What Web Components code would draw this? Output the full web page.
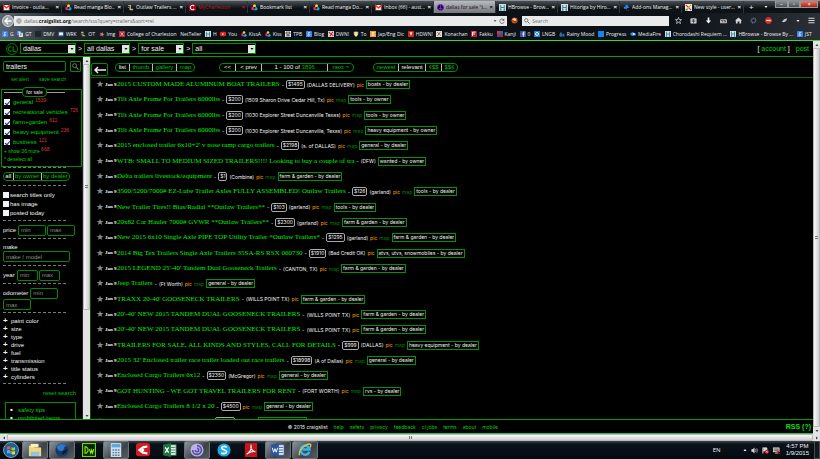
<!DOCTYPE html>
<html lang="en">
<head>
<meta charset="utf-8">
<title>dallas for sale "trailers" - craigslist</title>
<style>
html,body{margin:0;height:100%;background:#000}
body{font:6px/8px "Liberation Sans",Arial,sans-serif;color:#f2f2f2;--edge:#008c00;--link:#00d400;overflow:hidden}
</style>
</head>
<body>
<desktop-screen></desktop-screen>
<script>
const define = (name, render) => customElements.define(name, class extends HTMLElement {
  connectedCallback() {
    if (this.shadowRoot) return;
    const t = document.createElement('template');
    t.innerHTML = '<style>*{box-sizing:border-box}a{color:inherit;text-decoration:none}button{font:inherit;color:inherit;background:none;border:0;padding:0;margin:0}</style>' + render(this);
    this.attachShadow({mode: 'open'}).append(t.content.cloneNode(true));
  }
});
const attr = (el, n, d = '') => el.getAttribute(n) ?? d;

const ICONS = {
  gmail: '<rect y="2" width="16" height="12" rx="1" fill="#eee"/><path d="M1 14V3l7 6 7-6v11" fill="none" stroke="#d93025" stroke-width="3"/>',
  manga: '<circle cx="5" cy="10" r="4.5" fill="#e91e8c"/><circle cx="11" cy="11" r="4" fill="#00b5e2"/><circle cx="8" cy="4" r="3.5" fill="#ffd400"/><circle cx="8" cy="9" r="2" fill="#111"/>',
  outlaw: '<path d="M3 2h6v9h5v3H7V5H3z" fill="#c9b96a"/><path d="M2 8h4v6" stroke="#eee" fill="none"/>',
  cofc: '<rect width="16" height="16" rx="2" fill="#a80018"/><path d="M12 5a5 5 0 1 0 0 6" stroke="#fff" stroke-width="2.4" fill="none"/>',
  peace: '<circle cx="8" cy="8" r="7" fill="#1a0030" stroke="#7a2bd0" stroke-width="2"/><path d="M8 1v14M8 8l-5 5M8 8l5 5" stroke="#7a2bd0" stroke-width="2"/>',
  hb: '<rect width="16" height="16" fill="#c9e6ee"/><path d="M4 2v12M12 2v12M4 8h8M2 14h4M10 14h4" stroke="#37707f" stroke-width="2"/>',
  puzzle: '<path d="M2 6h4a3 3 0 1 1 5 0h3v4a3 3 0 1 0 0 4H8v-3H2z" fill="#2f7ff0"/>',
  style: '<rect width="16" height="16" fill="#eee"/><path d="M2 2l12 12" stroke="#c33" stroke-width="3"/><path d="M14 2L2 14" stroke="#e5a11a" stroke-width="3"/><path d="M1 12h5v3H1z" fill="#295"/>',
  google: '<rect width="16" height="16" rx="1" fill="#3b82ec"/><path d="M11 4H7a2 2 0 1 0 1 4c3 0 3 5-1 5-4 0-3-4 1-4" stroke="#fff" stroke-width="1.6" fill="none"/>',
  gt: '<rect width="11" height="11" fill="#4a8df0"/><rect x="5" y="5" width="11" height="11" fill="#ddd"/><path d="M3 3h5v4" stroke="#fff" stroke-width="2" fill="none"/><path d="M8 8h5M10 8v5" stroke="#567" stroke-width="1.5"/>',
  dark: '<rect width="16" height="16" fill="#20262b"/>',
  mail: '<rect x="1" y="2" width="14" height="12" fill="#3a78b8"/><rect x="3" y="4" width="10" height="7" fill="#f4f4f4"/>',
  img: '<path d="M2 4l5 2 3-4 1 5 4 2-4 2v4l-4-3-5 1 2-5z" fill="#e8502a"/><rect x="5" y="6" width="5" height="5" fill="#5aa0f0"/>',
  red: '<rect width="16" height="16" fill="#b03038"/><path d="M4 3l8 10M12 3L4 13" stroke="#fbb" stroke-width="2"/>',
  youtube: '<rect y="2" width="16" height="12" rx="3" fill="#e62117"/><path d="M6 5l5 3-5 3z" fill="#fff"/>',
  tpb: '<rect width="16" height="16" fill="#eee"/><path d="M3 3h10v5H3zM8 8v5M2 13h12" stroke="#222" stroke-width="2" fill="none"/>',
  dwn: '<rect width="16" height="16" fill="#d9cfc8"/><path d="M2 3l12 10M5 14l8-12" stroke="#c2273a" stroke-width="3"/>',
  shield: '<path d="M2 2h12v6c0 4-6 7-6 7S2 12 2 8z" fill="#d9c36a"/><path d="M8 2v12" stroke="#fff" stroke-width="3"/>',
  jap: '<rect width="16" height="16" fill="#f49b2e"/><path d="M4 4h8M4 8h8M4 12h8M8 3v10" stroke="#fff" stroke-width="1.5"/>',
  hdw: '<rect width="16" height="16" fill="#d52415"/><path d="M4 3h8L8 13z" fill="#fff3c0"/>',
  kona: '<rect width="16" height="16" fill="#e8ded2"/><path d="M3 3l10 9M4 13l8-11" stroke="#7a4a34" stroke-width="2"/>',
  fakku: '<rect width="16" height="16" fill="#c31d2a"/><path d="M4 13V3h8M4 8h6" stroke="#fff" stroke-width="2.5" fill="none"/>',
  kanji: '<rect width="8" height="8" fill="#d33"/><rect x="8" width="8" height="8" fill="#2a62c9"/><rect y="8" width="8" height="8" fill="#7a2b9e"/><rect x="8" y="8" width="8" height="8" fill="#b2222e"/><path d="M5 5h6v6H5z" fill="#1b7a3a"/>',
  fb: '<rect width="16" height="16" rx="1" fill="#3b5998"/><path d="M12 3H9v12M6 8h6" stroke="#fff" stroke-width="2.4" fill="none"/>',
  ring: '<rect width="16" height="16" fill="#1f7fd0"/><circle cx="8" cy="8" r="4" stroke="#fff" stroke-width="2.4" fill="none"/>',
  rain: '<path d="M5 2s4 6 4 9a4 4 0 0 1-8 0c0-3 4-9 4-9zM12 6s3 4 3 6a3 3 0 0 1-6 0c0-2 3-6 3-6z" fill="#2f6fa6"/>',
  blue: '<rect width="16" height="16" fill="#1583ee"/>',
  fire: '<path d="M0 8c4-6 9-6 12-3 3 0 4 2 4 4s-2 4-5 3C7 15 3 12 0 8z" fill="#2d8ef0"/><circle cx="10" cy="8" r="2.5" fill="#fff"/>',
  duck: '<circle cx="8" cy="8" r="7" fill="#d94a1c"/><path d="M3 5c4-4 9-2 9 2l-5 4z" fill="#ffd9a0"/><path d="M4 8l8 4" stroke="#7a1a05" stroke-width="2"/>',
  globe: '<circle cx="8" cy="8" r="6.5" fill="#c9c9c9" stroke="#999" stroke-width="1.5"/><path d="M2 8h12M8 2c-4 4-4 8 0 12M8 2c4 4 4 8 0 12" stroke="#888" fill="none"/>',
  reload: '<path d="M13 5a6 6 0 1 0 1 5" stroke="#555" stroke-width="2" fill="none"/><path d="M14 1v6H8z" fill="#555"/>',
  mag: '<circle cx="6" cy="6" r="4.5" stroke="currentColor" stroke-width="2" fill="none"/><path d="M10 10l5 5" stroke="currentColor" stroke-width="2.4"/>',
  star: '<path d="M8 1l2 5h5l-4 3.500 1.500 5.500L8 12l-4.500 3L5 9.500 1 6h5z" fill="none" stroke="#e6e6e6" stroke-width="1.600"/>',
  clip: '<rect x="1" y="3" width="14" height="12" rx="2" fill="#d0d0d0"/><path d="M5 3V1h6v2M4 7h8M4 10h8M8 5v9" stroke="#222" stroke-width="1.400" fill="none"/>',
  down: '<path d="M6 1h4v7h4l-6 7-6-7h4z" fill="#f2f2f2"/>',
  label: '<rect x="0" y="5" width="16" height="9" rx="1" fill="#bbb"/><path d="M2 8h4v4M8 8h3v4M13 8v4" stroke="#222" stroke-width="1.400" fill="none"/>',
  home: '<path d="M8 1l8 7h-2v7h-4v-5H6v5H2V8H0z" fill="#d5d5d5"/>',
  gear: '<circle cx="8" cy="8" r="5" fill="none" stroke="#5b6d7b" stroke-width="3.500" stroke-dasharray="3 1"/>',
  abp: '<path d="M5 0h6l5 5v6l-5 5H5l-5-5V5z" fill="#d7261c"/><path d="M3 8h10" stroke="#fff" stroke-width="3"/>',
  flash: '<path d="M2 11l5-6 7-2-2 6-6 3z" fill="#c7c7c7"/>',
  menu: '<path d="M1 3h14M1 8h14M1 13h14" stroke="#dcdcdc" stroke-width="2.400"/>',
  orb: '<circle cx="8" cy="8" r="7.500" fill="#1d5f97" stroke="#8fb8d8" stroke-width=".8"/><path d="M4 5q2-1.500 3.500 0V8Q6 6.500 4 7.500z" fill="#f0562a"/><path d="M8.500 5Q10 6.500 12 5v3q-2 1-3.500 0z" fill="#8ed13a"/><path d="M4 8.500Q6 7.500 7.500 9v3Q6 10.500 4 11.500z" fill="#4ab5f0"/><path d="M8.500 9q1.500 1 3.500 0v3q-2 1-3.500 0z" fill="#ffd21f"/>',
  folder: '<path d="M1 3h5l1 2h8v10H1z" fill="#f3d679"/><path d="M3 1h9v4H3z" fill="#fbf0b8"/><path d="M3 10h10v5H3z" fill="#8fc4e6"/>',
  nightly: '<circle cx="8" cy="8" r="7.500" fill="#173a66"/><path d="M2 4c3-4 9-4 12 0-3-1-4 1-4 3s-4 3-6 1-2-3-2-4z" fill="#2c7ac9"/><path d="M9 9c3 0 4-2 5-3 0 5-3 7-6 7" fill="#081a33"/>',
  dw: '<rect x=".5" y=".5" width="15" height="15" fill="#072401" stroke="#6fd800" stroke-width="1.500"/><path d="M3.500 4.500v7h1.500q2-1 2-3.500t-2-3.500zM8.500 7l1.500 4.500L11 8l1 3.500L13.500 7" fill="none" stroke="#8df000" stroke-width="1.300"/>',
  calc: '<rect x="2" width="12" height="16" rx="1" fill="#cfe0ee"/><rect x="3" y="1" width="10" height="4" fill="#5fa8dc"/><path d="M4 8h8M4 11h8M4 14h8" stroke="#5b7f9c" stroke-width="1.500" stroke-dasharray="2 1"/>',
  redc: '<rect width="16" height="15" rx="3" fill="#d41a22"/><path d="M13 4L8 5 4 8l4 3 5 1" stroke="#fff" stroke-width="2.500" fill="none"/><circle cx="8" cy="8" r="1.500" fill="#fff"/>',
  excel: '<rect x="7" y="2" width="8" height="12" fill="#e9f5ee" stroke="#1f7246"/><path d="M9 5h5M9 8h5M9 11h5" stroke="#1f7246"/><path d="M0 2l9-2v16l-9-2z" fill="#1f7246"/><path d="M2.500 5l4 6M6.500 5l-4 6" stroke="#fff" stroke-width="1.500"/>',
  torrent: '<circle cx="8" cy="8" r="7.500" fill="#b9b2e6"/><path d="M8 3a5 5 0 1 1-5 5M8 6a2 2 0 1 1-2 2" stroke="#5b4aa8" stroke-width="1.800" fill="none"/>',
  skype: '<circle cx="8" cy="8" r="7.500" fill="#19a9e5"/><path d="M11 5C9 3 5 4 5.500 6S11 8 11 10 7 13 5 11" stroke="#fff" stroke-width="1.800" fill="none"/>',
  pdf: '<rect x="1" width="14" height="16" rx="1" fill="#c3161c"/><path d="M3 13C7 10 9 6 8 3c-1 3 2 7 5 7-3-1-8 1-10 3z" fill="none" stroke="#fff" stroke-width="1.300"/>',
  word: '<rect x="7" y="2" width="8" height="12" fill="#eaf0fa" stroke="#2a5699"/><path d="M9 5h5M9 8h5M9 11h5" stroke="#2a5699"/><path d="M0 2l9-2v16l-9-2z" fill="#2a5699"/><path d="M1.500 5.500l1.500 5 1.500-4 1.500 4 1.500-5" stroke="#fff" stroke-width="1.100" fill="none"/>',
  ie: '<path d="M13 10a5.200 5.200 0 1 1 .3-2.500H5" fill="none" stroke="#35b4ee" stroke-width="2.800"/><path d="M2 14C-1 12 6 2 13 1c2 0 2 2 1 4" fill="none" stroke="#f0c63a" stroke-width="1.400"/>',
  speaker: '<path d="M1 5h3l4-4v14l-4-4H1z" fill="#ddd"/><path d="M10 5q2 3 0 6M13 3q3 5 0 10" stroke="#ddd" fill="none" stroke-width="1.500"/>',
  flag: '<path d="M2 1v14M3 2h8v7H3" stroke="#eee" stroke-width="2" fill="#ccc"/><circle cx="11" cy="11" r="4.500" fill="#d22"/><path d="M9 9l4 4M13 9l-4 4" stroke="#fff"/>',
  net: '<rect x="1" y="2" width="13" height="9" fill="#888" stroke="#eee" stroke-width="1.500"/><path d="M5 14h6" stroke="#eee" stroke-width="2"/><path d="M8 8l7 7M15 8l-7 7" stroke="#e22" stroke-width="2.400"/>',
  back: '<path d="M15 8H2M8 2L2 8l6 6" stroke="currentColor" stroke-width="2.600" fill="none"/>',
  cl: '<circle cx="8" cy="8" r="7.300" fill="none" stroke="#008c00" stroke-width="1.200"/><path d="M7.500 5.500A3 3 0 1 0 7.500 10.500M9.500 4.500v6.500h3.500" stroke="#00b400" stroke-width="1.200" fill="none"/>',
  arrow: '<path d="M2 4h12L8 12z" fill="currentColor"/>',
  up: '<path d="M2 12h12L8 4z" fill="currentColor"/>',
  left: '<path d="M12 2v12L4 8z" fill="currentColor"/>',
  right: '<path d="M4 2v12l8-6z" fill="currentColor"/>'
};
define('ui-icon', el => `<style>:host{display:block;flex:none;width:var(--s,7px);height:var(--s,7px)}svg{display:block;width:100%;height:100%}</style><svg viewBox="0 0 16 16" aria-hidden="true">${ICONS[attr(el,'name')]}</svg>`);

define('browser-tab', el => `<style>
:host{display:flex;align-items:center;gap:2px;flex:0 1 62px;min-width:0;padding:0 2px 0 3px;font:5px/8px "Open Sans",sans-serif;color:#f4f4f4;white-space:nowrap;border-right:1px solid #30363b}
:host([active]){background:linear-gradient(#b8bcc0,#73777a);color:#14061c}
:host([red]){color:#c01818}
a{flex:1;overflow:hidden}button{font:bold 6px/8px "Liberation Sans",sans-serif}
</style><ui-icon name="${attr(el,'icon')}"></ui-icon><a href="#"><slot></slot></a><button aria-label="Close tab">×</button>`);

define('bookmark-link', el => `<style>:host{display:block;white-space:nowrap}a{display:flex;align-items:center;gap:2px}</style><a href="#">${el.hasAttribute('icon') ? `<ui-icon style="--s:6px" name="${attr(el,'icon')}"></ui-icon>` : ''}<slot></slot></a>`);

const TABS = [['gmail','Invoice - outla...'],['manga','Read manga Blo...'],['outlaw','Outlaw Trailers ...'],['cofc','MyCharleston'],['manga','Bookmark list'],['manga','Read manga Do...'],['gmail','Inbox (66) - aust...'],['peace','dallas for sale "t...'],['hb','HBrowse - Brow...'],['hb','Hitoriga by Hiro...'],['puzzle','Add-ons Manag...'],['style','New style - user...']];
const MARKS = [['google','G'],['gt','GT'],['dark','DMV'],['mail','WRK'],['outlaw','OT'],['img','Img'],['red','College of Charleston'],['','NetTeller'],['hb','H'],['youtube','You'],['manga','KissA'],['manga','Kiss'],['tpb','TPB'],['google','Blog'],['dwn','DWN!'],['shield','To'],['jap','Jap/Eng Dic'],['hdw','HDWN!'],['kona','Konachan'],['fakku','Fakku'],['kanji','Kanji'],['fb','0'],['ring','LNGB'],['rain','Rainy Mood'],['blue','Progress'],['fire','MediaFire'],['hb','Chorodashi Requiem ...'],['hb','HBrowse - Browse By ...'],['google','JST']];

define('browser-chrome', () => `<style>
:host{display:block;flex:none;background:linear-gradient(90deg,#59636b 0,#1a2127 70px,#0b1116 180px,#0b1116 82%,#2a3036 100%);border-bottom:1px solid #2fe02f;font:5px/8px "Open Sans",sans-serif}
.tabs{display:flex;height:13px;border-top:1px solid #8b9094;background:linear-gradient(#4a5156,#0d1216 60%)}
.plus{padding:0 5px;font-size:8px}.caret{padding:0 5px}
.win{display:flex;margin-left:auto;height:7px;width:43px;margin-right:2px}
.win button{flex:1;background:linear-gradient(#8b9298,#4a5055);border:1px solid #999;border-top:0;color:#fff;font:5px/5px "Liberation Sans",sans-serif}
.win button:last-child{flex:1.5;background:linear-gradient(#e08070,#b02010)}
.nav{display:flex;align-items:center;height:15px;padding-left:2px}
.back{width:12px;height:12px;flex:none;border-radius:6px;background:#9aa3aa;color:#fff;display:grid;place-items:center;border:1px solid #cdd2d6}
.box{display:flex;align-items:center;height:10px;background:#e9eaea;color:#666;padding:0 2px;gap:2px}
.url{flex:495 1 0}.search{flex:144 1 0}
.box input{flex:1;min-width:0;width:0;border:0;padding:0;background:none;font:5px/8px "Open Sans",sans-serif;color:#555;outline:0;height:8px}
.box p{flex:1;margin:0}.box b{color:#111}
.fox{margin:0 4px}
.tools{display:flex;align-items:center;justify-content:space-between;flex:142 1 0;padding:0 5px 0 6px}
.marks{display:flex;align-items:center;justify-content:space-between;height:12px;padding:0 8px 0 2px;color:#eee}
</style>
<div class="tabs">${TABS.map(([i,t],n) => `<browser-tab icon="${i}" ${n===7?'active':''} ${n===3?'red':''}>${t}</browser-tab>`).join('')}<button class="plus" aria-label="New tab">+</button><button class="caret" aria-label="All tabs"><ui-icon name="arrow" style="--s:4px"></ui-icon></button>
<div class="win"><button aria-label="Minimize">–</button><button aria-label="Restore">▫</button><button aria-label="Close">×</button></div></div>
<div class="nav"><button class="back" aria-label="Back"><ui-icon name="back" style="--s:8px"></ui-icon></button>
<div class="box url"><ui-icon name="globe" style="--s:6px"></ui-icon><p>dallas.<b>craigslist.org</b>/search/sss?query=trailers&amp;sort=rel</p><ui-icon name="arrow" style="--s:4px"></ui-icon><ui-icon name="reload" style="--s:6px"></ui-icon></div>
<ui-icon class="fox" name="duck"></ui-icon>
<div class="box search"><ui-icon name="mag" style="--s:6px"></ui-icon><input aria-label="Search" placeholder="Search"></div>
<div class="tools">${['star','clip','down','label','home','gear','abp','flash','arrow','menu'].map(n => `<button aria-label="${n}"><ui-icon name="${n}" style="--s:${n==='arrow'?4:7}px"></ui-icon></button>`).join('')}</div></div>
<div class="marks">${MARKS.map(([i,t]) => `<bookmark-link ${i?`icon="${i}"`:''}>${t}</bookmark-link>`).join('')}</div>`);

define('area-select', el => `<style>
:host{display:grid;width:var(--w)}select,span{grid-area:1/1}
select{appearance:none;width:100%;height:11px;border:1px solid var(--edge);background:#000;color:#f2f2f2;font:7px/9px "Liberation Sans",sans-serif;padding:0 9px 0 2px;border-radius:0}
span{justify-self:end;align-self:center;margin-right:1px;width:7px;height:8px;background:#e4e4e4;color:#111;display:grid;place-items:center;pointer-events:none}
</style><select aria-label="${attr(el,'label')}"><option>${attr(el,'value')}</option></select><span><ui-icon name="arrow" style="--s:4px"></ui-icon></span>`);

define('site-header', () => `<style>
:host{display:flex;align-items:center;gap:2px;height:16px;flex:none;padding:0 4px 0 6px;border-bottom:1px solid #00a000;font-size:7px}
nav{margin-left:auto;display:flex;gap:6px;color:var(--link)}nav span{color:#eee}nav span a{color:var(--link)}
</style><a href="#" aria-label="craigslist"><ui-icon name="cl" style="--s:12px"></ui-icon></a>
<area-select label="city" value="dallas" style="--w:56px"></area-select>&gt;
<area-select label="area" value="all dallas" style="--w:46px"></area-select>&gt;
<area-select label="section" value="for sale" style="--w:46px"></area-select>&gt;
<area-select label="category" value="all" style="--w:64px"></area-select>
<nav><span>[ <a href="#">account</a> ]</span><a href="#">post</a></nav>`);

define('check-row', el => `<style>
:host{display:block;white-space:nowrap}label{display:flex;align-items:center;height:var(--h,10px);gap:var(--g,3px)}
input{appearance:none;flex:none;width:6px;height:6px;margin:0;background:#f2f2f2;display:grid;place-items:center}
input:checked::after{content:"";width:2px;height:4px;border:solid #1c2f80;border-width:0 1px 1px 0;transform:rotate(40deg)}
sup{font:5px/5px "Liberation Sans",sans-serif;color:#d83a3a;align-self:flex-start;margin:1px 0 0 -1px}
</style><label><input type="checkbox" ${el.hasAttribute('on')?'checked':''}><span><slot></slot></span>${el.hasAttribute('count')?`<sup>${attr(el,'count')}</sup>`:''}</label>`);

define('text-field', el => `<style>:host{display:inline-block;width:var(--w,28px);vertical-align:top}
input{display:block;width:100%;height:11px;border:1px solid var(--edge);border-radius:2px;background:#000;color:#f2f2f2;font:inherit;padding:0 2px;margin:0;outline:0}
input::placeholder{color:#8e8e8e;opacity:1}</style><input aria-label="${attr(el,'label')}" placeholder="${attr(el,'hint')}" value="${attr(el,'value')}">`);

define('pill-group', el => `<style>:host{display:inline-flex;height:9px;border:1px solid var(--edge);border-radius:4px;color:#00c000;width:var(--w,auto)}
::slotted(*){flex:1 1 auto;font:inherit;line-height:7px!important;padding:0 var(--p,2px)!important;white-space:nowrap;text-align:center}
::slotted(:not(:last-child)){border-right:1px solid #bbb!important}
::slotted([aria-pressed=true]),::slotted(.plain){color:#f2f2f2!important}</style><slot></slot>`);

define('filter-sidebar', () => `<style>
:host{display:block;flex:none;width:83px;overflow:hidden;padding-top:4px;border-right:1px solid #222}
hr{border:0;border-top:1px dashed #777;margin:2px 16px 4px 3px}hr.wide{margin-top:3px}
.search{display:flex;gap:4px;padding:0 1px 0 3px}.search text-field{flex:1;font-size:7px}.search button{width:11px;border:1px solid var(--edge);display:grid;place-items:center;color:#888;border-radius:1px}
.alerts{display:flex;justify-content:space-between;padding:3px 16px 0 11px;font-size:5px;line-height:9px;color:#00c000}
.cats{margin:5px 0 0 1px;border:1px solid var(--edge);padding:0 2px 3px;color:#00d400}
.legend{display:flex;align-items:center;margin:-3px 14px 0 0;color:#eee}.legend::before,.legend::after{content:"";flex:1;height:1px;background:#999}
.legend span{border:1px solid var(--edge);border-radius:4px;padding:0 3px;font-size:5px;line-height:8px;background:#000}
.small{font-size:5px;line-height:8px}.small sup{font-size:5px;line-height:5px;color:#d83a3a;vertical-align:2px}
.pad{padding-left:3px}.line{display:flex;gap:1px;padding-left:3px;line-height:11px}.line span{margin-right:1px}
ul{list-style:none;margin:0;padding:0 0 0 3px}li::before{content:"+";font-weight:bold;font-size:8px;display:inline-block;width:8px;line-height:8px}
.reset{text-align:right;padding:1px 6px 5px 0;color:#00c000;line-height:8px}
.tips{margin:0 6px 0 5px;border:1px solid var(--edge);padding:3px 0 20px 4px;color:#00d400}.tips li::before{content:"•";color:#eee}
</style>
<div class="search"><text-field label="search" value="trailers"></text-field><button aria-label="search"><ui-icon name="mag"></ui-icon></button></div>
<div class="alerts"><a href="#">set alert</a><a href="#">save search</a></div>
<div class="cats" role="group" aria-label="for sale"><div class="legend"><span>for sale</span></div>
<check-row on count="1539">general</check-row><check-row on count="726">recreational vehicles</check-row><check-row on count="611">farm+garden</check-row><check-row on count="236">heavy equipment</check-row><check-row on count="121">business</check-row>
<div class="small"><a href="#">+ show 36 more <sup>668</sup></a></div><div class="small"><a href="#">* deselect all</a></div></div>
<hr style="margin-top:0">
<div class="pad" style="display:flex;margin-bottom:4px;--p:1px"><pill-group style="--w:67px"><button aria-pressed="true">all</button><button>by owner</button><button>by dealer</button></pill-group></div>
<hr>
<div class="pad" style="--h:9px;--g:1px"><check-row>search titles only</check-row><check-row>has image</check-row><check-row>posted today</check-row></div>
<hr class="wide"><div class="line"><span>price</span><text-field label="price min" hint="min"></text-field><text-field label="price max" hint="max"></text-field></div>
<hr><div class="pad">make</div><div class="pad"><text-field style="--w:67px" label="make / model" hint="make / model"></text-field></div>
<hr class="wide"><div class="line" style="--w:21px"><span>year</span><text-field label="year min" hint="min"></text-field><text-field label="year max" hint="max"></text-field></div>
<hr><div class="line"><span>odometer</span><text-field label="odometer min" hint="min"></text-field></div><div class="pad"><text-field label="odometer max" hint="max"></text-field></div>
<hr><ul>${['paint color','size','type','drive','fuel','transmission','title status','cylinders'].map(t => `<li><a href="#">${t}</a></li>`).join('')}</ul>
<hr><div class="reset"><a href="#">reset search</a></div>
<ul class="tips"><li><a href="#">safety tips</a></li><li><a href="#">prohibited items</a></li></ul>`);

define('scroll-bar', el => { const h = el.hasAttribute('horizontal'); return `<style>
:host{display:flex;flex:none;${h?'height:7px;':'width:7px;flex-direction:column;'}background:#e3e3e3;color:#444;align-items:center}
button{width:7px;height:7px;display:grid;place-items:center;flex:none}
i{flex:var(--t,1) 1 0;align-self:stretch;border:1px solid #b8b8b8;border-radius:1px;display:grid;place-items:center;background:linear-gradient(${h?'':'90deg,'}#fafafa,#cfcfcf)}
i::after{content:"";width:3px;height:3px;background:repeating-linear-gradient(${h?'90deg,':''}#777 0 1px,transparent 1px 2px)}
u{flex:var(--r,0) 1 0}</style><button aria-label="back"><ui-icon style="--s:4px" name="${h?'left':'up'}"></ui-icon></button><i></i><u></u><button aria-label="forward"><ui-icon style="--s:4px" name="${h?'right':'arrow'}"></ui-icon></button>`; });

define('listing-row', el => `<style>
:host{display:flex;align-items:center;gap:2px;white-space:nowrap;font-family:Inter,sans-serif;font-size:5px}
.star{color:#8a8a8a;font:9px/9px "DejaVu Sans",sans-serif;width:7px}time{font:bold 5px/8px "Liberation Serif",serif;width:10px}
.t{font:7px/9px "Liberation Serif",serif;color:#00f000}
.price{border:1px solid #aaa;border-radius:2px;line-height:7px;padding:0 1px}
.pic{color:#ffa000}.map{color:#008000}.cat{border:1px solid #009400;line-height:7px;padding:0 1px}
</style><button class="star" aria-label="save">★</button><time>Jan 9</time><a class="t" href="#"><slot></slot></a><span>-</span>${el.hasAttribute('price')?`<span class="price">${attr(el,'price')}</span>`:''}${el.hasAttribute('place')?`<span>(${attr(el,'place')})</span>`:''}${el.hasAttribute('pic')?'<span class="pic">pic</span>':''}${el.hasAttribute('map')?'<a class="map" href="#">map</a>':''}<a class="cat" href="#">${attr(el,'cat')}</a>`);

const D=' - by dealer', O=' - by owner', FG='farm & garden'+D;
const ROWS = [
['2015 CUSTOM MADE ALUMINUM BOAT TRAILERS','$1495','DALLAS DELIVERY','p','boats'+D],
['Tilt Axle Frame For Trailers 6000lbs','$200','1509 Sharon Drive Cedar Hill, Tx','pm','tools'+O],
['Tilt Axle Frame For Trailers 6000lbs','$200','1030 Explorer Street Duncanville Texas','pm','tools'+O],
['Tilt Axle Frame For Trailers 6000lbs','$200','1030 Explorer Street Duncanville, Texas','pm','heavy equipment'+O],
["2015 enclosed trailer 6x10+2' v nose ramp cargo trailers",'$2198','s. of DALLAS','pm','general'+D],
['WTB: SMALL TO MEDIUM SIZED TRAILERS!!!! Looking to buy a couple of tra','','DFW','','wanted'+O],
['Delta trailers livestock/equipment','$1','Combine','pm',FG],
['3500/5200/7000# EZ-Lube Trailer Axles FULLY ASSEMBLED! Outlaw Trailers','$126','garland','pm','tools'+D],
['New Trailer Tires!! Bias/Radial **Outlaw Trailers**','$103','garland','pm','tools'+D],
['20x82 Car Hauler 7000# GVWR **Outlaw Trailers**','$2300','garland','pm',FG],
['New 2015 6x10 Single Axle PIPE TOP Utility Trailer *Outlaw Trailers*','$1295','garland','pm',FG],
['2014 Big Tex Trailers Single Axle Trailers 35SA-RS RSX 060730','$1910','Bad Credit OK','p','atvs, utvs, snowmobiles'+D],
["2015 LEGEND 25'-40' Tandem Dual Gooseneck Trailers",'','CANTON, TX','pm',FG],
['Jeep Trailers','','Ft Worth','pm','general'+D],
["TRAXX 20-40' GOOSENECK TRAILERS",'','WILLS POINT TX','p',FG],
["20'-40' NEW 2015 TANDEM DUAL GOOSENECK TRAILERS",'','WILLS POINT TX','p',FG],
["20'-40' NEW 2015 TANDEM DUAL GOOSENECK TRAILERS",'','WILLS POINT TX','p',FG],
['TRAILERS FOR SALE, ALL KINDS AND STYLES, CALL FOR DETAILS','$999','DALLAS','pm','heavy equipment'+D],
["2015 32' Enclosed trailer race trailer loaded out race trailers",'$18998','A of Dallas','pm','general'+D],
['Enclosed Cargo Trailers 6x12','$2350','McGregor','pm','general'+D],
['GOT HUNTING - WE GOT TRAVEL TRAILERS FOR RENT','','FORT WORTH','pm','rvs'+D],
['Enclosed Cargo Trailers 8 1/2 x 20','$4500','','pm','general'+D],
['New enclosed Trailer in a option','$3500','','pm','general'+D]];

define('listing-results', () => `<style>
:host{display:flex;flex-direction:column;flex:1;min-width:0;overflow:hidden;border-left:1px solid #0a4a0a}
.bar{display:flex;align-items:flex-start;flex:none;height:21px;padding-top:6px;border-bottom:1px solid #006a00}
.backb{width:17px;height:13px;border:1px solid var(--edge);border-radius:2px;display:grid;place-items:center;margin-right:7px}
svg{display:block}.nav{margin:0 19px 0 24px}
.list{display:grid;grid-auto-rows:15px 15px 16px;padding-left:5px;flex:none;margin-top:-1px}
</style>
<div class="bar"><button class="backb" aria-label="collapse"><svg width="12" height="8" viewBox="0 0 12 8"><path d="M12 4H1M4 1L1 4l3 3" stroke="#eee" stroke-width="1.500" fill="none"/></svg></button>
<pill-group style="--w:80px"><button aria-pressed="true">list</button><button>thumb</button><button>gallery</button><button>map</button></pill-group>
<pill-group class="nav" style="--w:135px"><button class="plain">&lt;&lt;</button><button class="plain">&lt; prev</button><span class="plain" style="flex-grow:5">1 - 100 of <a style="color:#00b800">3896</a></span><button>next &gt;</button></pill-group>
<pill-group style="--w:85px"><button>newest</button><button aria-pressed="true">relevant</button><button>¢$$</button><button>$$¢</button></pill-group></div>
<div class="list">${ROWS.map(([t,p,l,f,c]) => `<listing-row ${p?`price="${p}"`:''} ${l?`place="${l}"`:''} ${f.includes('p')?'pic':''} ${f.includes('m')?'map':''} cat="${c}">${t}</listing-row>`).join('')}</div>`);

define('site-footer', () => `<style>
:host{display:flex;align-items:center;flex:none;height:15px;border-top:1px solid #00a000;border-bottom:1px solid #2fc02f;padding-right:2px}
nav{flex:1;display:flex;justify-content:center;gap:6px;color:#00d400;font-family:Inter,sans-serif;font-size:5px}nav span{color:#eee}b{font-size:7px;color:#00e400}
</style><nav><span>© 2015 craigslist</span>${['help','safety','privacy','feedback','cl jobs','terms','about','mobile'].map(t => `<a href="#">${t}</a>`).join('')}</nav><b><a href="#">RSS</a> <a href="#">(?)</a></b>`);

define('task-button', el => `<style>:host{display:block;width:27px}button{width:26px;height:18px;display:grid;place-items:center;border-radius:2px}
:host([open]) button{background:linear-gradient(135deg,#8c949b,#3b4248 60%,#555c62);border:1px solid #6b737a}</style><button aria-label="${attr(el,'icon')}"><ui-icon style="--s:14px" name="${attr(el,'icon')}"></ui-icon></button>`);

define('task-bar', () => `<style>
:host{display:flex;align-items:center;flex:none;height:18px;background:linear-gradient(#3a464e,#0b1118 3px,#060b12);font:6px/7px "Open Sans",sans-serif}
.orb{width:22px;display:grid;place-items:center}
.tray{margin-left:auto;display:flex;align-items:center;gap:4px}.tray span{margin-right:18px}time{text-align:center;font:6px/7px "Liberation Sans",sans-serif;margin:0 1px 0 2px}
.show{width:6px;height:18px;border:1px solid #444c52;background:#12181d}
</style><button class="orb" aria-label="Start"><ui-icon name="orb" style="--s:16px"></ui-icon></button>
${['folder*','nightly*','dw','calc*','redc','excel','torrent*','skype','pdf','word*','ie*'].map(n => `<task-button icon="${n.replace('*','')}" ${n.endsWith('*')?'open':''}></task-button>`).join('')}
<div class="tray"><span>EN</span><ui-icon name="up" style="--s:4px"></ui-icon><ui-icon name="speaker"></ui-icon><ui-icon name="flag"></ui-icon><ui-icon name="net"></ui-icon><time>4:57 PM<br>1/9/2015</time><button class="show" aria-label="Show desktop"></button></div>`);

define('desktop-screen', () => `<style>
:host{display:flex;flex-direction:column;height:100vh;overflow:hidden}
.view{flex:1;display:flex;min-height:0}.page{flex:1;display:flex;flex-direction:column;min-width:0}
.body{flex:1;display:flex;min-height:0}
</style><browser-chrome></browser-chrome>
<div class="view"><div class="page"><site-header></site-header>
<div class="body"><filter-sidebar></filter-sidebar><scroll-bar style="--t:245;--r:103"></scroll-bar><listing-results></listing-results></div>
<site-footer></site-footer></div><scroll-bar></scroll-bar></div>
<scroll-bar horizontal></scroll-bar><task-bar></task-bar>`);
</script>
</body>
</html>
